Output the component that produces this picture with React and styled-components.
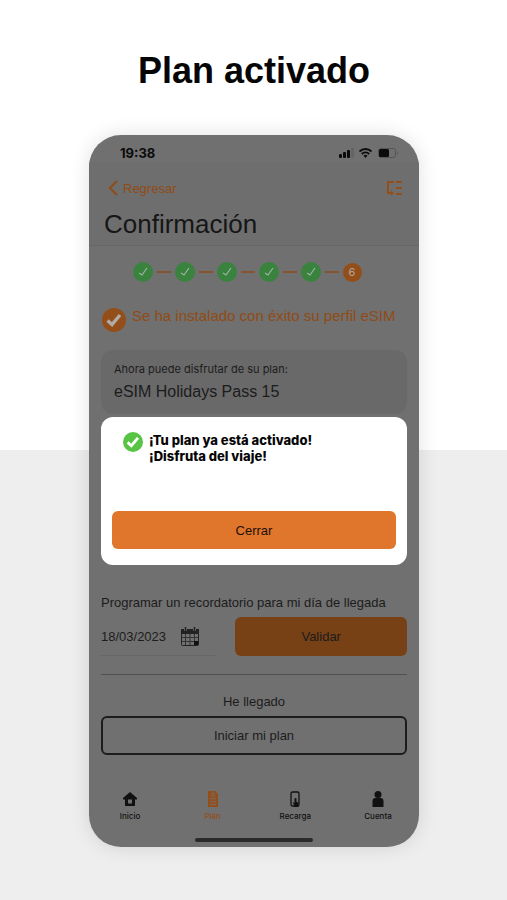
import React, { useState } from "react";
import styled, { createGlobalStyle } from "styled-components";

const tabs = [
  { name: "Inicio", icon: <HomeIcon /> },
  { name: "Plan", icon: <PlanIcon />, active: true },
  { name: "Recarga", icon: <RechargeIcon /> },
  { name: "Cuenta", icon: <AccountIcon /> },
];

const doneSteps = [1, 2, 3, 4, 5];

const App = () => {
  const [open, setOpen] = useState(true);
  const [date, setDate] = useState("18/03/2023");

  return (
    <>
      <GlobalStyle />
      <Page>
        <Title>Plan activado</Title>
        <Phone>
          <StatusBar>
            <Clock>19:38</Clock>
            <StatusIcons />
          </StatusBar>
          <Header>
            <TopRow>
              <BackLink href="#inicio">
                <svg width="11" height="16" viewBox="0 0 11 16">
                  <path d="M9 1L2 8l7 7" fill="none" stroke="currentColor" strokeWidth="2" />
                </svg>
                Regresar
              </BackLink>
              <MenuButton aria-label="Pasos">
                <svg width="16" height="16" viewBox="0 0 16 16" fill="none" stroke="currentColor" strokeWidth="2">
                  <path d="M7 2H1v11h5M9 2h6M9 8h6M9 14h6" />
                  <path d="M4 10l3 3-3 3z" fill="currentColor" stroke="none" />
                </svg>
              </MenuButton>
            </TopRow>
            <Heading>Confirmación</Heading>
          </Header>
          <Content>
            <Steps>
              {doneSteps.map((step) => (
                <React.Fragment key={step}>
                  <Step>
                    <svg width="12" height="12" viewBox="0 0 12 12">
                      <path d="M2 7l3 2 5-7" fill="none" stroke="#9fb3a1" strokeWidth="1.2" />
                    </svg>
                  </Step>
                  <Dash />
                </React.Fragment>
              ))}
              <Step $current>6</Step>
            </Steps>
            <Success>
              <CheckCircle size={24} color="#944e19" mark="#b0aba7" />
              <p>Se ha instalado con éxito su perfil eSIM</p>
            </Success>
            <Card>
              <CardLabel>Ahora puede disfrutar de su plan:</CardLabel>
              <CardName>eSIM Holidays Pass 15</CardName>
            </Card>
            <Reminder>
              <label htmlFor="date">Programar un recordatorio para mi día de llegada</label>
              <ReminderRow>
                <DateField>
                  <DateInput id="date" value={date} onChange={(e) => setDate(e.target.value)} />
                  <CalendarIcon />
                </DateField>
                <ValidateButton>Validar</ValidateButton>
              </ReminderRow>
            </Reminder>
            <Arrival>
              <p>He llegado</p>
              <StartButton>Iniciar mi plan</StartButton>
            </Arrival>
          </Content>
          <TabBar>
            {tabs.map((tab) => (
              <Tab key={tab.name} href={"#" + tab.name.toLowerCase()} $active={tab.active}>
                {tab.icon}
                {tab.name}
              </Tab>
            ))}
          </TabBar>
          <HomeBar />
          {open && (
            <Backdrop>
              <Dialog role="dialog" aria-labelledby="message">
                <Message>
                  <CheckCircle size={20} color="#57c443" mark="#ffffff" />
                  <p id="message">
                    ¡Tu plan ya está activado!
                    <br />
                    ¡Disfruta del viaje!
                  </p>
                </Message>
                <CloseButton onClick={() => setOpen(false)}>Cerrar</CloseButton>
              </Dialog>
            </Backdrop>
          )}
        </Phone>
      </Page>
    </>
  );
};

export default App;

function CheckCircle({ size, color, mark }) {
  return (
    <svg width={size} height={size} viewBox="0 0 24 24">
      <circle cx="12" cy="12" r="12" fill={color} />
      <path d="M5.5 12.5l4.5 4 8-9.500" fill="none" stroke={mark} strokeWidth="3.4" />
    </svg>
  );
}

function StatusIcons() {
  return (
    <svg width="60" height="12" viewBox="0 0 60 12">
      <g fill="#0b0b0b">
        <rect x="0" y="7" width="3" height="4" rx="1" />
        <rect x="4" y="5" width="3" height="6" rx="1" />
        <rect x="8" y="3" width="3" height="8" rx="1" />
      </g>
      <rect x="12" y="1" width="3" height="10" rx="1" fill="#646464" />
      <g fill="none" stroke="#0b0b0b" strokeWidth="1.8">
        <path d="M20.500 4.500a8.500 8.500 0 0 1 12 0" />
        <path d="M22.800 7a5.200 5.200 0 0 1 7.400 0" />
      </g>
      <path d="M24.500 8.600a3 3 0 0 1 4 0l-2 2.400z" fill="#0b0b0b" />
      <rect x="39.500" y="1.500" width="17" height="9" rx="2.500" fill="none" stroke="#555" />
      <rect x="40" y="2" width="10" height="8" rx="1.500" fill="#0b0b0b" />
      <path d="M58 4.500v3q1-.5 1-1.500t-1-1.500" fill="#555" />
    </svg>
  );
}

function CalendarIcon() {
  return (
    <svg width="18" height="19" viewBox="0 0 18 19">
      <path d="M.5 3.500h17v14q0 1-1 1h-15q-1 0-1-1z" fill="none" stroke="#222" />
      <path d="M0 2h18v5H0z" fill="#222" />
      <path d="M4.500 0v4M13.500 0v4" stroke="#707070" strokeWidth="3" />
      <path d="M4.500 0v4M13.500 0v4" stroke="#222" strokeWidth="1.500" />
      <path d="M4.500 7v11M9 7v11M13.500 7v11M1 10.500h16M1 14.500h16" stroke="#333" />
      <path d="M13 14h4v4h-4z" fill="#111" />
    </svg>
  );
}

function HomeIcon() {
  return (
    <svg width="16" height="16" viewBox="0 0 16 16">
      <path fillRule="evenodd" d="M8 1l7 6v1.500h-2V15H3V8.500H1V7zM6 8.500v4h4v-4z" fill="currentColor" />
    </svg>
  );
}

function PlanIcon() {
  return (
    <svg width="16" height="16" viewBox="0 0 16 16">
      <path d="M3 0h7l3 3v13H3z" fill="currentColor" />
      <circle cx="8" cy="3.500" r="1.600" fill="none" stroke="#707070" />
      <path d="M5 7.500h6M5 10.500h6M5 13.500h6" stroke="#707070" strokeWidth="1.500" strokeDasharray="1.500 .7" />
    </svg>
  );
}

function RechargeIcon() {
  return (
    <svg width="16" height="16" viewBox="0 0 16 16">
      <rect x="4" y="1" width="8" height="14" rx="1.500" fill="none" stroke="currentColor" strokeWidth="1.300" />
      <path d="M7 16v-2l-1.500-3 2 1V7.500q1-1 2 0V11l2 .6V16z" fill="currentColor" />
    </svg>
  );
}

function AccountIcon() {
  return (
    <svg width="16" height="16" viewBox="0 0 16 16" fill="currentColor">
      <circle cx="8" cy="3.500" r="3.500" />
      <path d="M2.500 16V10q0-3 3-3h5q3 0 3 3v6z" />
    </svg>
  );
}

const GlobalStyle = createGlobalStyle`
  * {
    box-sizing: border-box;
  }
  body {
    margin: 0;
    font-family: "Liberation Sans", Arial, sans-serif;
  }
  p, h1, h2 {
    margin: 0;
  }
  button, input {
    font-family: inherit;
  }
  svg {
    display: block;
    flex-shrink: 0;
  }
`;

const Page = styled.main`
  min-height: 100vh;
  padding: 49px 88px 48px 89px;
  background: linear-gradient(#ffffff 50%, #eeeeee 50%);
`;
const Title = styled.h1`
  font-size: 36px;
  line-height: 44px;
  text-align: center;
  color: #050505;
`;
const Phone = styled.section`
  position: relative;
  display: flex;
  flex-direction: column;
  margin-top: 42px;
  border-radius: 32px;
  overflow: hidden;
  background-color: #707070;
  color: #1c1c1c;
  box-shadow: 0 0 20px rgba(0, 0, 0, 0.12);
`;
const StatusBar = styled.div`
  display: flex;
  justify-content: space-between;
  align-items: center;
  padding: 9px 20px 0 31px;
  height: 27px;
`;
const Clock = styled.span`
  font-family: Inter, sans-serif;
  font-size: 13px;
  font-weight: 700;
  line-height: 16px;
  color: #0b0b0b;
`;
const Header = styled.header`
  padding: 17px 16px 5px 15px;
  background-color: #6e6e6e;
  border-bottom: 1px solid #676767;
`;
const TopRow = styled.div`
  display: flex;
  justify-content: space-between;
  align-items: center;
  height: 18px;
`;
const BackLink = styled.a`
  display: flex;
  align-items: center;
  gap: 4px;
  padding-left: 4px;
  font-size: 13px;
  color: #914b16;
  text-decoration: none;
`;
const MenuButton = styled.button`
  border: 0;
  padding: 0;
  background: none;
  color: #944e19;
`;
const Heading = styled.h2`
  margin-top: 11px;
  font-size: 26px;
  line-height: 32px;
  font-weight: 400;
  color: #161616;
`;
const Content = styled.div`
  padding: 16px 12px 0;
`;
const Steps = styled.div`
  display: flex;
  justify-content: center;
  align-items: center;
  gap: 4px;
  padding-right: 14px;
`;
const Step = styled.span`
  display: flex;
  justify-content: center;
  align-items: center;
  width: ${(props) => (props.$current ? "19px" : "20px")};
  height: ${(props) => (props.$current ? "19px" : "20px")};
  border-radius: 50%;
  background-color: ${(props) => (props.$current ? "#944e19" : "#39833f")};
  color: #b0a79e;
  font-family: Inter, sans-serif;
  font-size: 11px;
`;
const Dash = styled.span`
  width: 14px;
  height: 2px;
  background-color: #87532f;
`;
const Success = styled.div`
  display: flex;
  align-items: flex-end;
  gap: 6px;
  margin-top: 24px;
  padding-left: 1px;
  font-size: 15px;
  line-height: 20px;
  white-space: nowrap;
  color: #914b16;

  p {
    align-self: flex-start;
  }
  svg {
    margin-top: 2px;
  }
`;
const Card = styled.div`
  margin-top: 18px;
  padding: 11px 13px 10px;
  border-radius: 12px;
  background-color: #696969;
`;
const CardLabel = styled.p`
  font-family: Inter, sans-serif;
  font-size: 11px;
  line-height: 16px;
`;
const CardName = styled.p`
  font-size: 16px;
  line-height: 24px;
  margin-top: 3px;
`;
const Reminder = styled.div`
  margin-top: 179px;
  padding-bottom: 18px;
  border-bottom: 1px solid #505050;
  font-size: 13px;
  line-height: 20px;
  white-space: nowrap;
`;
const ReminderRow = styled.div`
  display: flex;
  gap: 20px;
  margin-top: 4px;
`;
const DateField = styled.div`
  display: flex;
  align-items: center;
  flex: 2 1 0;
  height: 39px;
  border-bottom: 1px solid #666666;
`;
const DateInput = styled.input`
  width: 80px;
  border: 0;
  padding: 0;
  background: none;
  color: inherit;
  font-size: 13px;
`;
const ValidateButton = styled.button`
  flex: 3 1 0;
  height: 39px;
  padding: 0;
  border: 0;
  border-radius: 6px;
  background-color: #784015;
  color: #1c1c1c;
  font-size: 13px;
`;
const Arrival = styled.div`
  padding-top: 17px;
  font-size: 13px;
  line-height: 20px;
  text-align: center;
`;
const StartButton = styled.button`
  width: 100%;
  height: 39px;
  margin-top: 4px;
  border: 2px solid #1c1c1c;
  border-radius: 6px;
  background: none;
  color: #1c1c1c;
  font-size: 13px;
`;
const TabBar = styled.nav`
  display: flex;
  justify-content: space-between;
  margin-top: 36px;
  padding: 0 21px;
`;
const Tab = styled.a`
  display: flex;
  flex-direction: column;
  align-items: center;
  gap: 4px;
  width: 40px;
  font-family: Inter, sans-serif;
  font-size: 8px;
  line-height: 10px;
  font-weight: 500;
  color: ${(props) => (props.$active ? "#944e19" : "#111111")};
  text-decoration: none;
`;
const HomeBar = styled.div`
  width: 118px;
  height: 4px;
  margin: 17px auto 5px;
  border-radius: 2px;
  background-color: #2a2a2a;
`;
const Backdrop = styled.div`
  position: absolute;
  inset: 0;
  display: flex;
  align-items: center;
  padding: 0 12px;
`;
const Dialog = styled.div`
  width: 100%;
  padding: 15px 11px 16px;
  border-radius: 12px;
  background-color: #ffffff;
`;
const Message = styled.div`
  display: flex;
  gap: 6px;
  min-height: 79px;
  padding-left: 11px;
  font-family: Inter, sans-serif;
  font-size: 13px;
  line-height: 16px;
  font-weight: 800;
  color: #050505;
`;
const CloseButton = styled.button`
  width: 100%;
  height: 38px;
  border: 0;
  border-radius: 6px;
  background-color: #e0752c;
  color: #1c1008;
  font-size: 13px;
`;
